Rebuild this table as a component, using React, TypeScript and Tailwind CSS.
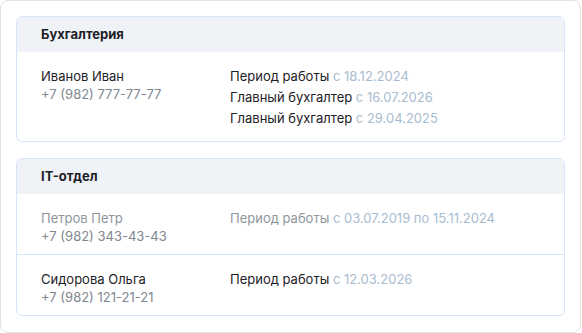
import React from 'react';

interface Period {
  title: string;
  dates: string;
}

interface Employee {
  name: string;
  phone: string;
  periods: Period[];
  dismissed?: boolean;
}

interface Department {
  title: string;
  employees: Employee[];
}

const departments: Department[] = [
  {
    title: 'Бухгалтерия',
    employees: [
      {
        name: 'Иванов Иван',
        phone: '+7 (982) 777-77-77',
        periods: [
          { title: 'Период работы', dates: 'с 18.12.2024' },
          { title: 'Главный бухгалтер', dates: 'с 16.07.2026' },
          { title: 'Главный бухгалтер', dates: 'с 29.04.2025' },
        ],
      },
    ],
  },
  {
    title: 'IT-отдел',
    employees: [
      {
        name: 'Петров Петр',
        phone: '+7 (982) 343-43-43',
        dismissed: true,
        periods: [{ title: 'Период работы', dates: 'с 03.07.2019 по 15.11.2024' }],
      },
      {
        name: 'Сидорова Ольга',
        phone: '+7 (982) 121-21-21',
        periods: [{ title: 'Период работы', dates: 'с 12.03.2026' }],
      },
    ],
  },
];

const EmployeeRow: React.FC<{ employee: Employee; last: boolean }> = ({ employee, last }) => (
  <div className={`flex px-6 pt-[15px] pb-[9px] ${last ? '' : 'border-b border-[#d6e6f8]'}`}>
    <div className="w-[189px] shrink-0 leading-[18px]">
      <div className={employee.dismissed ? 'text-[#8e959d]' : 'text-[#1d2126]'}>{employee.name}</div>
      <div className="text-[#80878f]">{employee.phone}</div>
    </div>
    <div className="flex flex-col leading-[21px] -mt-[1px] pb-[3px]">
      {employee.periods.map((p, i) => (
        <div key={i}>
          <span className={employee.dismissed ? 'text-[#8e959d]' : 'text-[#1d2126]'}>{p.title}</span>{' '}
          <span className="text-[#a9bccf]">{p.dates}</span>
        </div>
      ))}
    </div>
  </div>
);

export default function App() {
  return (
    <div
      className="w-[581px] h-[333px] border border-[#e2e2e2] rounded-lg bg-white px-[15px] pt-[15px] flex flex-col gap-[16px] text-[13px]"
      style={{ fontFamily: 'Inter, "Noto Sans", sans-serif' }}
    >
      {departments.map((dep) => (
        <div key={dep.title} className="border border-[#d6e6f8] rounded-md overflow-hidden">
          <div className="h-[35px] bg-[#eff3f8] px-6 flex items-center font-bold text-[#1d2126]">
            {dep.title}
          </div>
          {dep.employees.map((e, i) => (
            <EmployeeRow key={e.name} employee={e} last={i === dep.employees.length - 1} />
          ))}
        </div>
      ))}
    </div>
  );
}
